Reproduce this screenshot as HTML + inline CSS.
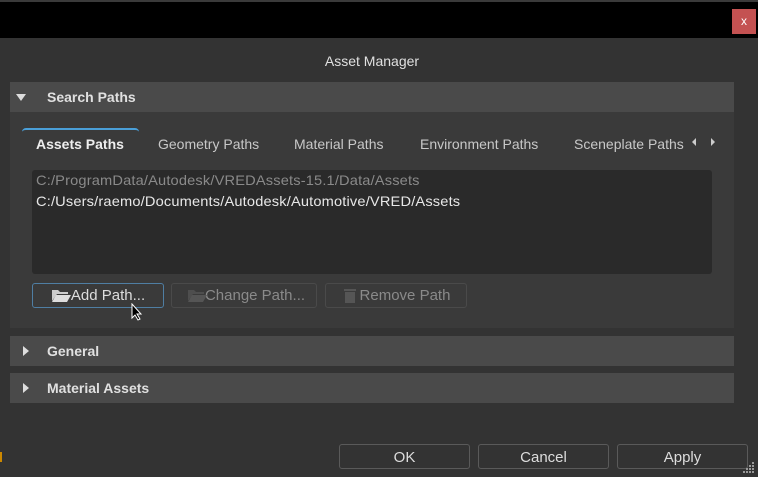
<!DOCTYPE html><html><head><style>
*{margin:0;padding:0;box-sizing:border-box}
body{width:758px;height:477px;background:#333;font-family:"Liberation Sans",sans-serif;color:#ddd;position:relative;overflow:hidden;font-size:14px}
.a{position:absolute}
.hdr{background:#4a4a4a;left:10px;width:724px;font-weight:bold;color:#e0e0e0;font-size:14px}
.btn{position:absolute;border:1px solid #555;border-radius:3px;text-align:center;font-size:15px;line-height:23px;color:#ddd}
.tab{position:absolute;top:136px;font-size:14px;color:#c8c8c8}
</style></head><body>
<div class="a" style="left:0;top:0;width:758px;height:2px;background:#3a3a3a"></div>
<div class="a" style="left:0;top:2px;width:758px;height:36px;background:#000"></div>
<div class="a" style="left:732px;top:9px;width:24px;height:25px;background:#c45252;color:#fff;font-size:12px;text-align:center;line-height:24px">x</div>
<div class="a" style="left:0;top:53px;width:744px;text-align:center;font-size:14px;color:#e0e0e0">Asset Manager</div>
<div class="a hdr" style="top:82px;height:30px;line-height:30px;padding-left:37px">Search Paths</div>
<div class="a" style="left:16px;top:94px;width:0;height:0;border-left:5px solid transparent;border-right:5px solid transparent;border-top:7px solid #ddd"></div>
<div class="a" style="left:10px;top:112px;width:724px;height:216px;background:#3a3a3a"></div>
<div class="a" style="left:22px;top:128px;width:117px;height:34px;border-top:2px solid #4a9fd8;border-radius:4px 4px 0 0;background:#3a3a3a"></div>
<div class="tab" style="left:36px;font-weight:bold;color:#eee">Assets Paths</div>
<div class="tab" style="left:158px">Geometry Paths</div>
<div class="tab" style="left:294px">Material Paths</div>
<div class="tab" style="left:420px">Environment Paths</div>
<div class="tab" style="left:574px;width:112px;overflow:hidden;white-space:nowrap">Sceneplate Paths</div>
<div class="a" style="left:692px;top:138px;border-top:4px solid transparent;border-bottom:4px solid transparent;border-right:4px solid #ccc"></div>
<div class="a" style="left:711px;top:138px;border-top:4px solid transparent;border-bottom:4px solid transparent;border-left:4px solid #ccc"></div>
<div class="a" style="left:32px;top:170px;width:680px;height:104px;background:#2a2a2a;border-radius:3px"></div>
<div class="a" style="left:36px;top:172px;color:#8a8a8a;font-size:14px;letter-spacing:0.15px;transform:scaleX(1.045);transform-origin:left">C:/ProgramData/Autodesk/VREDAssets-15.1/Data/Assets</div>
<div class="a" style="left:36px;top:193px;color:#e8e8e8;font-size:14px;letter-spacing:0.15px;transform:scaleX(1.045);transform-origin:left">C:/Users/raemo/Documents/Autodesk/Automotive/VRED/Assets</div>
<div class="btn" style="left:32px;top:283px;width:132px;height:25px;border-color:#4f7ea3;background:#3a3a3a">
<svg style="position:absolute;left:18px;top:4px" width="20" height="14"><path d="M1 2h6l2 2h8v2H6L1 13z" fill="#ccc"/><path d="M5 7h15l-4 7H1z" fill="#ddd"/></svg><span style="padding-left:20px">Add Path...</span></div>
<div class="btn" style="left:171px;top:283px;width:146px;height:25px;border-color:#4a4a4a;color:#8a8a8a">
<svg style="position:absolute;left:15px;top:4px" width="20" height="14"><path d="M1 2h6l2 2h8v2H6L1 13z" fill="#4e4e4e"/><path d="M5 7h15l-4 7H1z" fill="#555"/></svg><span style="padding-left:22px">Change Path...</span></div>
<div class="btn" style="left:325px;top:283px;width:142px;height:25px;border-color:#4a4a4a;color:#8a8a8a">
<svg style="position:absolute;left:17px;top:3px" width="14" height="17"><rect x="1" y="2" width="12" height="2" fill="#555"/><rect x="2" y="5" width="10" height="11" fill="#555"/></svg><span style="padding-left:18px">Remove Path</span></div>
<svg class="a" style="left:131px;top:303px" width="12" height="18"><path d="M1 1v14l3-3 3 5 2-1-3-5h4z" fill="#000" stroke="#fff" stroke-width="1"/></svg>
<div class="a hdr" style="top:336px;height:30px;line-height:30px;padding-left:37px">General</div>
<div class="a" style="left:23px;top:346px;border-top:5px solid transparent;border-bottom:5px solid transparent;border-left:6px solid #ddd"></div>
<div class="a hdr" style="top:373px;height:30px;line-height:30px;padding-left:37px">Material Assets</div>
<div class="a" style="left:23px;top:383px;border-top:5px solid transparent;border-bottom:5px solid transparent;border-left:6px solid #ddd"></div>
<div class="btn" style="left:339px;top:444px;width:131px;height:25px;border-color:#5a5a5a;line-height:26px">OK</div>
<div class="btn" style="left:478px;top:444px;width:131px;height:25px;border-color:#5a5a5a;line-height:26px">Cancel</div>
<div class="btn" style="left:617px;top:444px;width:131px;height:25px;border-color:#5a5a5a;line-height:26px">Apply</div>
<svg class="a" style="left:742px;top:461px" width="14" height="14"><g fill="#999"><rect x="10" y="1" width="2" height="2"/><rect x="7" y="4" width="2" height="2"/><rect x="10" y="4" width="2" height="2"/><rect x="4" y="7" width="2" height="2"/><rect x="7" y="7" width="2" height="2"/><rect x="10" y="7" width="2" height="2"/><rect x="1" y="10" width="2" height="2"/><rect x="4" y="10" width="2" height="2"/><rect x="7" y="10" width="2" height="2"/><rect x="10" y="10" width="2" height="2"/></g></svg>
<div class="a" style="left:0;top:452px;width:2px;height:10px;background:#c80"></div>
</body></html>
